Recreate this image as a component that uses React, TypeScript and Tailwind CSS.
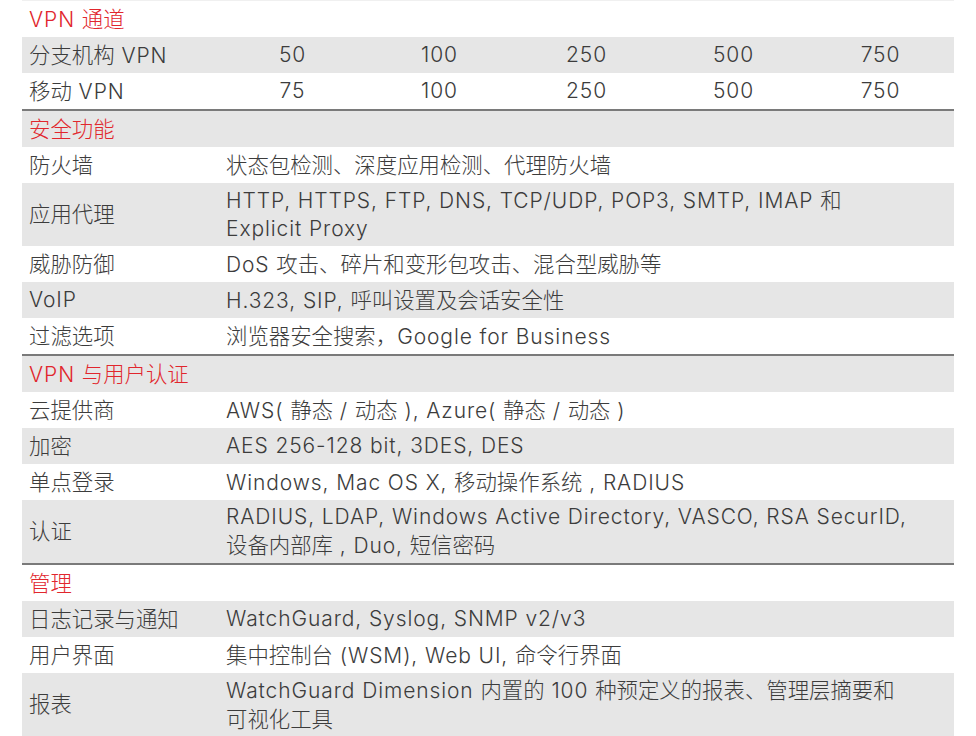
const sections: { title: string; rows: { label: string; value?: string; nums?: string[]; tall?: boolean }[] }[] = [
  {
    title: "VPN 通道",
    rows: [
      { label: "分支机构 VPN", nums: ["50", "100", "250", "500", "750"] },
      { label: "移动 VPN", nums: ["75", "100", "250", "500", "750"] },
    ],
  },
  {
    title: "安全功能",
    rows: [
      { label: "防火墙", value: "状态包检测、深度应用检测、代理防火墙" },
      { label: "应用代理", value: "HTTP, HTTPS, FTP, DNS, TCP/UDP, POP3, SMTP, IMAP 和\nExplicit Proxy", tall: true },
      { label: "威胁防御", value: "DoS 攻击、碎片和变形包攻击、混合型威胁等" },
      { label: "VoIP", value: "H.323, SIP, 呼叫设置及会话安全性" },
      { label: "过滤选项", value: "浏览器安全搜索，Google for Business" },
    ],
  },
  {
    title: "VPN 与用户认证",
    rows: [
      { label: "云提供商", value: "AWS( 静态 / 动态 ), Azure( 静态 / 动态 )" },
      { label: "加密", value: "AES 256-128 bit, 3DES, DES" },
      { label: "单点登录", value: "Windows, Mac OS X, 移动操作系统 , RADIUS" },
      { label: "认证", value: "RADIUS, LDAP, Windows Active Directory, VASCO, RSA SecurID,\n设备内部库 , Duo, 短信密码", tall: true },
    ],
  },
  {
    title: "管理",
    rows: [
      { label: "日志记录与通知", value: "WatchGuard, Syslog, SNMP v2/v3" },
      { label: "用户界面", value: "集中控制台 (WSM), Web UI, 命令行界面" },
      { label: "报表", value: "WatchGuard Dimension 内置的 100 种预定义的报表、管理层摘要和\n可视化工具", tall: true },
    ],
  },
];

// latin and chinese runs are set a little differently, like the print original
function Txt({ s }: { s: string }) {
  const parts = s.split(/([\u3000-\u303f\u4e00-\u9fff\uff00-\uffef]+)/);
  return (
    <>
      {parts.map((p, i) =>
        i % 2 === 1 ? (
          <span key={i} className="text-[21.4px] tracking-normal">{p}</span>
        ) : (
          <span key={i} className="text-[21px] tracking-[0.9px]">{p}</span>
        )
      )}
    </>
  );
}

export default function App() {
  let idx = 0;
  return (
    <main className="w-[976px] h-[736px] bg-white overflow-hidden text-[21px] leading-[28px] font-light text-[#3c3c3c] [font-family:Inter,'Noto_Sans_CJK_SC',sans-serif]">
      <div className="ml-[22px] w-[932px] border-t border-[#f0f0f0]">
        {sections.map((s) => {
          const headBg = idx++ % 2 === 0 ? "bg-white" : "bg-[#e6e6e6]";
          return (
            <section key={s.title} className="border-b-2 border-[#7a7a7a]">
              <div className={`h-[36px] flex items-center pl-[7px] text-[#e1262d] ${headBg}`}>
                <div><Txt s={s.title} /></div>
              </div>
              {s.rows.map((r) => {
                const bg = idx++ % 2 === 0 ? "bg-white" : "bg-[#e6e6e6]";
                return (
                  <div key={r.label} className={`flex items-center ${r.tall ? "h-[63px]" : "h-[36px]"} ${bg}`}>
                    <div className="w-[197px] shrink-0 pl-[7px]"><Txt s={r.label} /></div>
                    {r.nums ? (
                      r.nums.map((n, i) => (
                        <div key={i} className="w-[147px] text-center"><Txt s={n} /></div>
                      ))
                    ) : (
                      <div className="pl-[7px] whitespace-pre-line"><Txt s={r.value ?? ""} /></div>
                    )}
                  </div>
                );
              })}
            </section>
          );
        })}
      </div>
    </main>
  );
}
